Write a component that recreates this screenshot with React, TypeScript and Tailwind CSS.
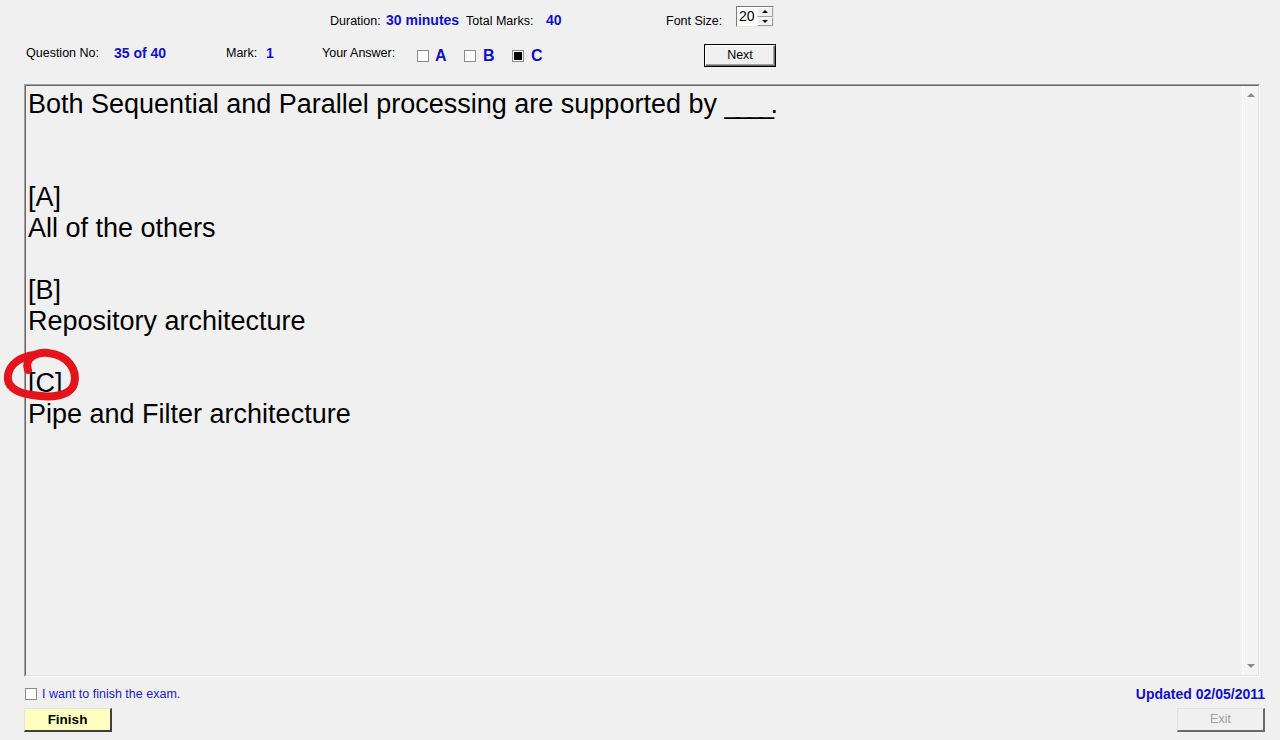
import React from "react";

const lbl = "text-[12.5px] text-black leading-none whitespace-nowrap";
const val = "text-[14px] font-bold text-[#1010c8] leading-none whitespace-nowrap";

function Check({ checked = false }: { checked?: boolean }) {
  return (
    <div className="w-[12px] h-[12px] border border-[#8a8a8a] bg-white flex items-center justify-center shrink-0">
      {checked && <div className="w-[8px] h-[8px] bg-black" />}
    </div>
  );
}

export default function App() {
  return (
    <div
      className="relative w-[1280px] h-[740px] bg-[#f0f0f0] overflow-hidden flex flex-col"
      style={{ fontFamily: '"Liberation Sans", Arial, sans-serif' }}
    >
      {/* Row 1 */}
      <div className="flex items-end h-[27px] pt-[6px] pl-[330px]">
        <div className="flex items-end">
          <span className={lbl + " w-[56px]"}>Duration:</span>
          <span className={val + " w-[80px]"}>30 minutes</span>
          <span className={lbl + " w-[80px]"}>Total Marks:</span>
          <span className={val + " w-[120px]"}>40</span>
          <span className={lbl + " w-[70px]"}>Font Size:</span>
        </div>
        <div className="w-[38px] h-[21px] bg-white border-t border-l border-[#7a7a7a] border-r border-b border-r-[#e6e6e6] border-b-[#e6e6e6] flex">
          <div className="flex-1 text-[14px] leading-[19px] pl-[2px] text-black">20</div>
          <div className="w-[16px] flex flex-col bg-[#f0f0f0]">
            <div className="flex-1 flex items-center justify-center border border-t-white border-l-white border-r-[#a0a0a0] border-b-[#a0a0a0]">
              <div className="w-0 h-0 border-l-[3px] border-r-[3px] border-b-[3px] border-l-transparent border-r-transparent border-b-black" />
            </div>
            <div className="flex-1 flex items-center justify-center border border-t-white border-l-white border-r-[#a0a0a0] border-b-[#a0a0a0]">
              <div className="w-0 h-0 border-l-[3px] border-r-[3px] border-t-[3px] border-l-transparent border-r-transparent border-t-black" />
            </div>
          </div>
        </div>
      </div>

      {/* Row 2 */}
      <div className="flex items-center h-[23px] mt-[17px] pl-[26px]">
        <span className={lbl + " w-[88px] -mt-[5px]"}>Question No:</span>
        <span className={val + " w-[112px] -mt-[5px]"}>35 of 40</span>
        <span className={lbl + " w-[40px] -mt-[5px]"}>Mark:</span>
        <span className={val + " w-[56px] -mt-[5px]"}>1</span>
        <span className={lbl + " w-[95px] -mt-[5px]"}>Your Answer:</span>
        <div className="flex items-center w-[47px]">
          <Check />
          <span className="ml-[6px] text-[16px] font-bold text-[#1010c8] leading-none">A</span>
        </div>
        <div className="flex items-center w-[48px]">
          <Check />
          <span className="ml-[7px] text-[16px] font-bold text-[#1010c8] leading-none">B</span>
        </div>
        <div className="flex items-center w-[192px]">
          <Check checked />
          <span className="ml-[7px] text-[16px] font-bold text-[#1010c8] leading-none">C</span>
        </div>
        <button className="w-[72px] h-[23px] border border-black bg-[#f0f0f0] shadow-[inset_1px_1px_0_#ffffff,inset_-1px_-1px_0_#696969,inset_-2px_-2px_0_#a0a0a0] text-[12.5px] text-black leading-none">
          Next
        </button>
      </div>

      {/* Text area */}
      <div className="ml-[24px] mt-[17px] w-[1236px] h-[593px] border-t border-l border-[#a0a0a0] border-r border-b border-r-white border-b-white">
        <div className="w-full h-full border-t border-l border-[#696969] border-r border-b border-r-[#e3e3e3] border-b-[#e3e3e3] flex">
          <div className="flex-1 pl-[2px] pt-[3px] text-[27px] leading-[31px] text-black">
            <div>
              Both Sequential and Parallel processing are supported by{" "}
              <span className="tracking-[-3.5px]">____</span>
              <span>.</span>
            </div>
            <div>&nbsp;</div>
            <div>&nbsp;</div>
            <div>[A]</div>
            <div>All of the others</div>
            <div>&nbsp;</div>
            <div>[B]</div>
            <div>Repository architecture</div>
            <div>&nbsp;</div>
            <div>[C]</div>
            <div>Pipe and Filter architecture</div>
          </div>
          <div className="w-[16px] border-l border-white bg-[#f4f4f4] flex flex-col justify-between items-center py-[7px]">
            <div className="w-0 h-0 border-l-[4px] border-r-[4px] border-b-[4px] border-l-transparent border-r-transparent border-b-[#8a8a8a]" />
            <div className="w-0 h-0 border-l-[4px] border-r-[4px] border-t-[4px] border-l-transparent border-r-transparent border-t-[#8a8a8a]" />
          </div>
        </div>
      </div>

      {/* Bottom row */}
      <div className="flex items-center justify-between mt-[10px] pl-[25px] pr-[15px] h-[14px]">
        <div className="flex items-center">
          <Check />
          <span className="ml-[5px] text-[12.5px] text-[#2020c8] leading-none">I want to finish the exam.</span>
        </div>
        <span className="text-[14px] font-bold text-[#1010c8] leading-none">Updated 02/05/2011</span>
      </div>
      <div className="flex items-center justify-between mt-[7px] pl-[24px] pr-[15px]">
        <button className="w-[88px] h-[24px] bg-[#ffffc0] border-t border-l border-[#e3e3e3] border-r-2 border-b-2 border-r-[#404040] border-b-[#404040] text-[13.5px] font-bold text-black leading-none">
          Finish
        </button>
        <button className="w-[88px] h-[24px] bg-[#f0f0f0] border-t border-l border-[#e3e3e3] border-r-2 border-b-2 border-r-[#696969] border-b-[#696969] text-[12.5px] text-[#a0a0a0] leading-none">
          Exit
        </button>
      </div>

      {/* Red annotation */}
      <svg className="absolute left-0 top-0 pointer-events-none" width="100" height="420" viewBox="0 0 100 420">
        <path
          d="M 28 370 C 24 358, 36 352, 48 353 C 68 355, 78 370, 74 384 C 70 397, 50 398, 32 395 C 16 393, 6 386, 8 375 C 10 364, 20 357, 34 355"
          fill="none"
          stroke="#e3141b"
          strokeWidth="8"
          strokeLinecap="round"
          strokeLinejoin="round"
        />
      </svg>
    </div>
  );
}
